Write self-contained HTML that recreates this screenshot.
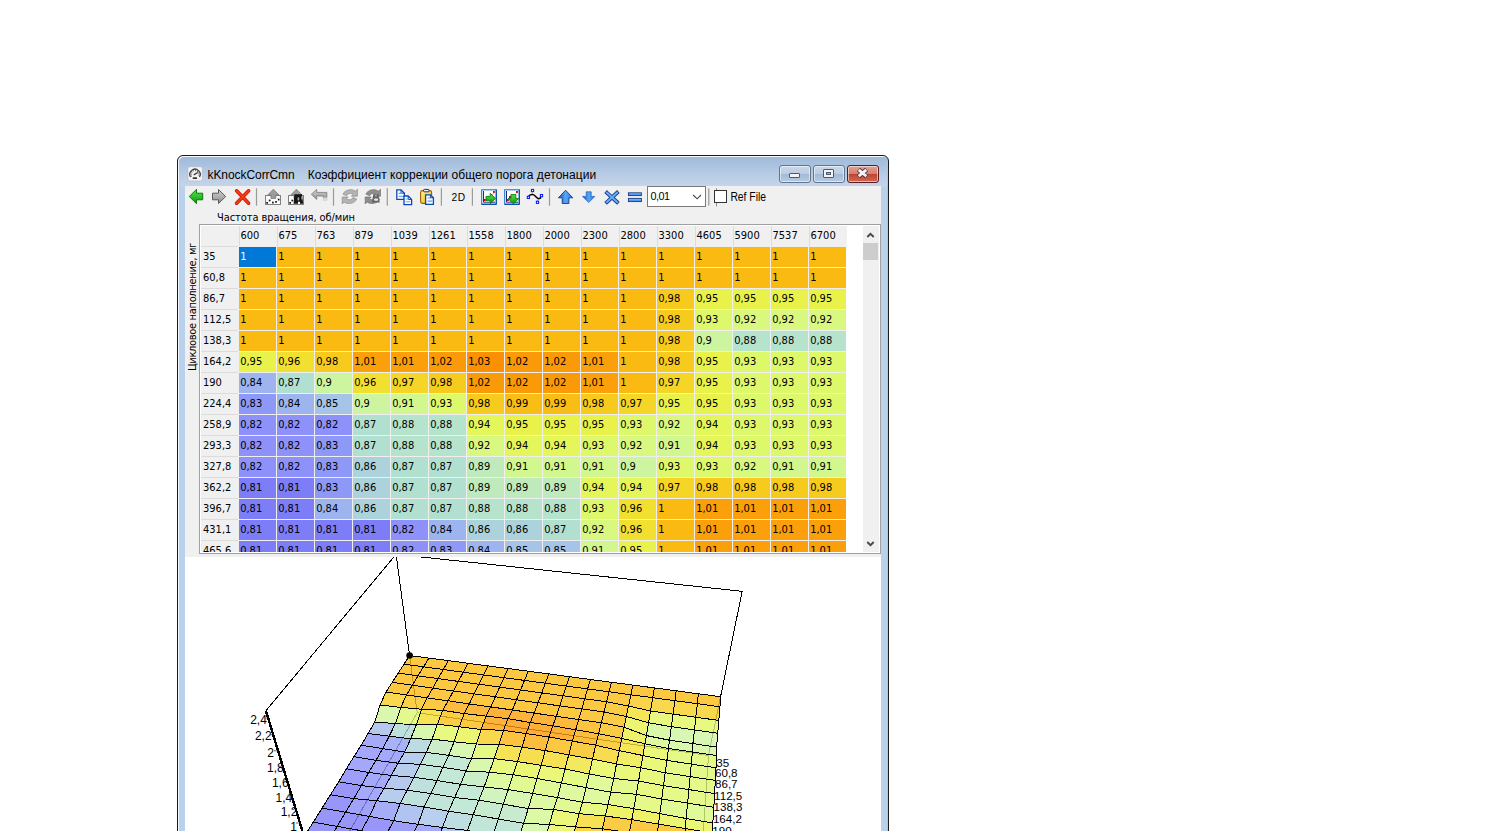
<!DOCTYPE html>
<html lang="ru"><head><meta charset="utf-8"><title>kKnockCorrCmn</title>
<style>
*{box-sizing:border-box;margin:0;padding:0}
html,body{width:1496px;height:831px;overflow:hidden;background:#fff}
body{position:relative;font-family:"DejaVu Sans Condensed","Liberation Sans",sans-serif;font-size:11px;color:#000}
#win{position:absolute;left:177px;top:155px;width:712px;height:700px}
#frame{position:absolute;left:0;top:0;width:712px;height:700px;border:1px solid #1b1b1b;border-radius:6px 6px 0 0;
 background:linear-gradient(180deg,#9db9d9 0px,#a9c1de 8px,#bccfe6 22px,#c4d5ea 30px,#b9d1ea 31px,#b9d1ea 100%);
 box-shadow:inset 1px 1px 0 #f6fafd, inset -1px 0 0 #7fd8f5}
#title{position:absolute;left:9px;top:11px;height:18px;white-space:nowrap}
.ticon{position:absolute;left:1px;top:0px;width:16px;height:16px}
.ttext{position:absolute;left:21.5px;top:2px;font-family:"Liberation Sans",sans-serif;font-size:12px;line-height:15px;color:#000;letter-spacing:-0.07px}
.ttext .gap{display:inline-block;width:13px}
.ttext .cy{letter-spacing:0.045px}
#btns{position:absolute;left:602px;top:10px;height:18px}
.wb{position:absolute;top:0;height:18px;border:1px solid #5f7590;border-radius:3px;box-shadow:inset 0 0 0 1px rgba(255,255,255,.55)}
.wb.min{left:0;width:32px;background:linear-gradient(180deg,#c9d8ea 0,#bccde3 48%,#a3bad6 52%,#b6cbe2 100%)}
.wb.max{left:34px;width:32px;background:linear-gradient(180deg,#c9d8ea 0,#bccde3 48%,#a3bad6 52%,#b6cbe2 100%)}
.wb.cls{left:68px;width:32px;border-color:#5a1d1d;background:linear-gradient(180deg,#e2a398 0,#d37f72 48%,#c1452e 52%,#cf6a55 100%)}
.wb.min i{position:absolute;left:9px;top:7px;width:11px;height:5px;background:#f4f4f4;border:1px solid #4d5a6b;border-radius:1px}
.wb.max i{position:absolute;left:9px;top:3px;width:11px;height:9px;background:#f4f4f4;border:1px solid #4d5a6b;border-radius:1px}
.wb.max i:after{content:"";box-sizing:border-box;position:absolute;left:2px;top:2px;width:5px;height:3px;background:#9fb4cf;border:1px solid #4d5a6b}
.wb.cls svg{position:absolute;left:7.7px;top:0.9px}
#client{position:absolute;left:8px;top:31px;width:696px;height:669px;background:#f0f0f0;overflow:hidden}
#toolbar{position:absolute;left:0;top:0;width:696px;height:24px}
#toolbar svg{position:absolute}
.sep{position:absolute;top:3px;width:1px;height:17px;background:#a0a0a0}
#xlabel{position:absolute;left:32px;top:25px;letter-spacing:-0.07px;font-size:11px;line-height:13px;white-space:nowrap}
#ylabel{position:absolute;left:0px;top:52px;width:14px;height:136px}
#ylabel span{position:absolute;left:0;top:0;transform-origin:0 0;transform:translate(1px,133px) rotate(-90deg);white-space:nowrap;font-size:11px;line-height:13px;letter-spacing:-0.33px}
#grid{position:absolute;left:14px;top:38px;width:682px;height:330px;border:1px solid #a0a0a0;background:#fff;overflow:hidden}
#gridin{position:absolute;left:0;top:0;width:647px;height:328px;overflow:hidden;background:#fff}
#gridin:before{content:"";position:absolute;left:0;top:1px;width:647px;height:20px;background:#f0f0f0}
#gridin:after{content:"";position:absolute;left:0;top:1px;width:38px;height:327px;background:#f0f0f0}
.hc{position:absolute;top:1px;width:38px;height:20px;line-height:19px;padding-left:0.5px;border-left:1px solid #dcdcdc;z-index:2;white-space:nowrap}
.rh{position:absolute;left:0;width:38px;height:21px;line-height:19px;padding-left:3px;border-top:1px solid #dcdcdc;z-index:2;white-space:nowrap}
.c{position:absolute;width:37px;height:20px;line-height:19px;padding-left:1.2px;z-index:1;white-space:nowrap;margin-top:1px}
.c.sel{background:#0078d7;color:#fff}
#vscroll{position:absolute;left:663px;top:0;width:17px;height:328px;background:#f0f0f0}
#vscroll .thumb{position:absolute;left:0px;top:18px;width:15px;height:17px;background:#cdcdcd}
#vscroll .sa{position:absolute;left:0;width:17px;height:17px}
#vscroll .sa.up{top:0}
#vscroll .sa.dn{top:311px}
#vscroll svg{position:absolute;left:3px;top:7px}
#chart{position:absolute;left:0;top:371px;width:696px;height:274px;background:#fff;overflow:hidden}
#chart svg{position:absolute;left:0;top:0}
#grid:after{content:"";position:absolute;left:0;top:0;width:680px;height:328px;border:1px solid #fff;box-sizing:border-box;z-index:9;pointer-events:none}
#vscroll .sa.dn svg{top:5px}
#cellbg{position:absolute;left:38px;top:21px;width:608px;height:307px;background:#efefef}

</style></head>
<body>
<div id="win">
 <div id="frame"></div>
 <div id="title"><span class="ticon"><svg width="16" height="16" viewBox="0 0 16 16"><rect x="0.9" y="0.7" width="14.5" height="14.2" rx="2" fill="#f3f3f3" stroke="#a9b6c6" stroke-width="0.6"/><path d="M3.5 11 A5.2 5.2 0 1 1 12.5 11" fill="none" stroke="#3c3c3c" stroke-width="1.3"/><path d="M4.6 10.4 A3.9 3.9 0 1 1 11.4 10.4" fill="none" stroke="#3c3c3c" stroke-width="1.2" stroke-dasharray="0.7 1.35"/><path d="M7.2 8.6 L10.4 6.8" stroke="#333" stroke-width="1.3" stroke-linecap="round"/><rect x="5.7" y="11.2" width="4.4" height="1.8" rx="0.6" fill="#333"/></svg></span><span class="ttext">kKnockCorrCmn<span class="gap"></span><span class="cy">Коэффициент коррекции общего порога детонации</span></span></div>
 <div id="btns"><div class="wb min"><i></i></div><div class="wb max"><i></i></div><div class="wb cls"><svg width="13" height="12" viewBox="0 0 13 12"><path d="M2.4 2.6 L10.6 9.4 M10.6 2.6 L2.4 9.4" stroke="#53303a" stroke-width="4.6" stroke-linecap="butt"/><path d="M2.7 2.85 L10.3 9.15 M10.3 2.85 L2.7 9.15" stroke="#f4f4f6" stroke-width="2.8"/></svg></div></div>
 <div id="client">
  <div id="toolbar"><svg width="696" height="24" viewBox="0 0 696 24" style="left:0;top:0"><defs>
<linearGradient id="gG" x1="0" y1="0" x2="0" y2="1"><stop offset="0" stop-color="#55dd44"/><stop offset="0.5" stop-color="#2fc22a"/><stop offset="1" stop-color="#0d8a10"/></linearGradient>
<linearGradient id="gGr" x1="0" y1="0" x2="0" y2="1"><stop offset="0" stop-color="#d0d0d0"/><stop offset="0.5" stop-color="#b0b0b0"/><stop offset="1" stop-color="#8c8c8c"/></linearGradient>
<linearGradient id="gB" x1="0" y1="0" x2="1" y2="0"><stop offset="0" stop-color="#1c50b0"/><stop offset="0.5" stop-color="#55a8f5"/><stop offset="1" stop-color="#2a6fd0"/></linearGradient>
<linearGradient id="gBv" x1="0" y1="0" x2="0" y2="1"><stop offset="0" stop-color="#8cc8ff"/><stop offset="1" stop-color="#2f7fe0"/></linearGradient>
<linearGradient id="gY" x1="0" y1="0" x2="1" y2="1"><stop offset="0" stop-color="#fff09a"/><stop offset="0.6" stop-color="#f6cf3a"/><stop offset="1" stop-color="#e0a010"/></linearGradient>
</defs><polygon points="4.3,10.5 11.5,3.3 11.5,7.2 17.7,7.2 17.7,13.8 11.5,13.8 11.5,17.7" fill="url(#gG)" stroke="#0b7d0e" stroke-width="1" stroke-linejoin="round"/><polygon points="40.7,10.5 33.5,3.5 33.5,7.2 27.5,7.2 27.5,13.8 33.5,13.8 33.5,17.5" fill="url(#gGr)" stroke="#5a5a5a" stroke-width="1" stroke-linejoin="round"/><path d="M51.6 4.8 L63.6 17.2 M63.6 4.8 L51.6 17.2" stroke="#c81208" stroke-width="3.6" stroke-linecap="round"/><path d="M51.6 4.8 L63.6 17.2 M63.6 4.8 L51.6 17.2" stroke="#f23c0c" stroke-width="2.2" stroke-linecap="round"/><rect x="70.9" y="2.3" width="1.2" height="17.4" fill="#9a9a9a"/><rect x="80.5" y="9.5" width="15" height="9" fill="#fafafa" stroke="#808080" stroke-width="1"/><polygon points="88.4,3.2 94.0,9.0 90.8,9.0 90.8,12.4 86.0,12.4 86.0,9.0 82.8,9.0" fill="#9c9c9c" stroke="#777" stroke-width="0.8"/><rect x="83.8" y="13.6" width="1.7" height="1.7" fill="#111"/><rect x="81.3" y="16.0" width="1.7" height="1.7" fill="#111"/><rect x="87.0" y="15.7" width="1.7" height="1.7" fill="#111"/><rect x="90.2" y="15.0" width="1.7" height="1.7" fill="#111"/><rect x="92.8" y="12.7" width="1.7" height="1.7" fill="#111"/><rect x="103.5" y="9.5" width="15" height="9" fill="#fafafa" stroke="#808080" stroke-width="1"/><polygon points="111.4,3.2 117.0,9.0 113.8,9.0 113.8,12.4 109.0,12.4 109.0,9.0 105.8,9.0" fill="#9c9c9c" stroke="#777" stroke-width="0.8"/><rect x="104.3" y="16.0" width="1.7" height="1.7" fill="#111"/><rect x="106.5" y="13.7" width="1.7" height="1.7" fill="#111"/><path d="M109.4 8.2 h7.6 l1.2 9.6 h-3.2 v-2 h-2 v2 h-4.4 z" fill="#151515"/><rect x="112.6" y="11.4" width="1.6" height="3" fill="#aaa"/><rect x="116.4" y="10.4" width="1" height="3" fill="#bbb"/><path d="M126.3 8.3 L131.7 3.4 L131.7 6.4 L141.8 6.4 L141.8 14.4 L138.4 14.4 L138.4 10 L131.7 10 L131.7 13.4 Z" fill="url(#gGr)" stroke="#7a7a7a" stroke-width="0.8" stroke-linejoin="round"/><rect x="137.8" y="11.6" width="5" height="3.6" fill="#f0f0f0" opacity="0.75"/><rect x="147.9" y="2.3" width="1.2" height="17.4" fill="#9a9a9a"/><g transform="translate(157.0,3.2)" fill="#b4b4b4" stroke="#8a8a8a" stroke-width="0.7" stroke-linejoin="round"><path d="M0.9 4.9 C2.8 0.6 9.5 -1 13.6 2.1 L15.4 0 L15.4 7 L9.5 7 L11.1 5.2 C9 3.6 5.8 3.9 4.7 6.5 Z"/><path d="M0.9 4.9 C2.8 0.6 9.5 -1 13.6 2.1 L15.4 0 L15.4 7 L9.5 7 L11.1 5.2 C9 3.6 5.8 3.9 4.7 6.5 Z" transform="rotate(180 7.8 7.4)"/></g><g transform="translate(180.0,3.2)" fill="#8e8e8e" stroke="#6e6e6e" stroke-width="0.7" stroke-linejoin="round"><path d="M0.9 4.9 C2.8 0.6 9.5 -1 13.6 2.1 L15.4 0 L15.4 7 L9.5 7 L11.1 5.2 C9 3.6 5.8 3.9 4.7 6.5 Z"/><path d="M0.9 4.9 C2.8 0.6 9.5 -1 13.6 2.1 L15.4 0 L15.4 7 L9.5 7 L11.1 5.2 C9 3.6 5.8 3.9 4.7 6.5 Z" transform="rotate(180 7.8 7.4)"/></g><path d="M188.4 8 h5 l1.4 8.6 h-8 z" fill="#666"/><rect x="189" y="12.6" width="4.2" height="2.2" rx="1" fill="#e8e8e8"/><rect x="190" y="8.6" width="1.8" height="1.8" fill="#aaa"/><rect x="201.7" y="2.3" width="1.2" height="17.4" fill="#9a9a9a"/><path d="M211.8 3.8 h4.2 l3.4 3.4 v6.2 h-7.6 z" fill="#fdfefe" stroke="#0c45b4" stroke-width="1.3" stroke-linejoin="miter"/><path d="M216.0 3.8 v3.4 h3.4" fill="none" stroke="#0c45b4" stroke-width="1"/><path d="M213.6 7.4 h3.6 M213.6 10.4 h5" stroke="#6aa8ee" stroke-width="1.1"/><path d="M219.0 10.0 h4.2 l3.4 3.4 v5.2 h-7.6 z" fill="#fdfefe" stroke="#0c45b4" stroke-width="1.3" stroke-linejoin="miter"/><path d="M223.2 10.0 v3.4 h3.4" fill="none" stroke="#0c45b4" stroke-width="1"/><path d="M220.6 13 h3 M220.6 15.8 h4.6" stroke="#6aa8ee" stroke-width="1.1"/><rect x="235.6" y="4.6" width="11" height="12.8" rx="1.8" fill="url(#gY)" stroke="#9a5e08" stroke-width="1.1"/><rect x="238.6" y="3.4" width="5.4" height="2.4" rx="0.8" fill="#f4f4fa" stroke="#1a2a80" stroke-width="1"/><path d="M240.6 8.8 h4.8 l3.0 3.0 v6.6 h-7.8 z" fill="#fdfefe" stroke="#0c45b4" stroke-width="1.3" stroke-linejoin="miter"/><path d="M245.4 8.8 v3.0 h3.0" fill="none" stroke="#0c45b4" stroke-width="1"/><path d="M242.6 12 h2.6 M242.6 15.2 h4.6" stroke="#5a9ae8" stroke-width="1.2"/><rect x="255.8" y="2.3" width="1.2" height="17.4" fill="#9a9a9a"/><text x="266.4" y="14.8" font-family="Liberation Sans, sans-serif" font-size="10.2" letter-spacing="0.7" fill="#000">2D</text><rect x="286.8" y="2.3" width="1.2" height="17.4" fill="#9a9a9a"/><rect x="296.7" y="3.8" width="14.6" height="14.4" fill="#fff" stroke="#1a74d0" stroke-width="1.1"/><path d="M296.7 18.3 h14.6 M311.3 3.8 v14.4" stroke="#0d4fa6" stroke-width="1.2" fill="none"/><path d="M298.5 5 v11.2 h11.6" stroke="#26267a" stroke-width="1" fill="none"/><path d="M308.9 5.9 l-1.8 4" stroke="#e88" stroke-width="0.8"/><rect x="308.0" y="5" width="1.9" height="1.9" fill="#c40818"/><rect x="298.8" y="13" width="2" height="2" fill="#c40818"/><polygon points="301.0,10.4 305.2,10.4 305.2,7.3 310.6,12.4 305.2,17.5 305.2,14.4 301.0,14.4" fill="url(#gG)" stroke="#0b7d0e" stroke-width="0.9" stroke-linejoin="round"/><rect x="319.7" y="3.8" width="14.6" height="14.4" fill="#fff" stroke="#1a74d0" stroke-width="1.1"/><path d="M319.7 18.3 h14.6 M334.3 3.8 v14.4" stroke="#0d4fa6" stroke-width="1.2" fill="none"/><path d="M321.5 5 v11.2 h11.6" stroke="#26267a" stroke-width="1" fill="none"/><path d="M331.9 5.9 l-1.8 4" stroke="#e88" stroke-width="0.8"/><rect x="331.0" y="5" width="1.9" height="1.9" fill="#c40818"/><rect x="324.0" y="10" width="2" height="2" fill="#c40818"/><rect x="321.8" y="13" width="2" height="2" fill="#c40818"/><polygon points="325.9,8.6 330.8,8.6 330.8,12.6 333.7,12.6 328.4,17.8 323.1,12.6 325.9,12.6" fill="url(#gG)" stroke="#0b7d0e" stroke-width="0.9" stroke-linejoin="round"/><path d="M347.5 4.5 L347.1 8.6 M352.5 16.3 L353 12.4" stroke="#a0a0a0" stroke-width="0.8"/><path d="M343.7 9.9 C345.5 8.4 347.2 7.8 349 9 C351 10.4 352 12.4 353.4 12.6 C354.6 12.8 355.4 12.2 356.2 11.4" fill="none" stroke="#000" stroke-width="1.5"/><rect x="346.4" y="3.4" width="2.2" height="2.2" fill="#fff" stroke="#0a18ff" stroke-width="1.05"/><rect x="342.3" y="10.3" width="2.2" height="2.2" fill="#fff" stroke="#0a18ff" stroke-width="1.05"/><rect x="355.4" y="8.5" width="2.2" height="2.2" fill="#fff" stroke="#0a18ff" stroke-width="1.05"/><rect x="351.4" y="15.2" width="2.2" height="2.2" fill="#fff" stroke="#0a18ff" stroke-width="1.05"/><rect x="363.9" y="2.3" width="1.2" height="17.4" fill="#9a9a9a"/><polygon points="380.6,4.2 387.8,11.8 383.9,11.8 383.9,17.5 377.2,17.5 377.2,11.8 373.4,11.8" fill="url(#gB)" stroke="#1a3a8c" stroke-width="0.9" stroke-linejoin="round"/><polygon points="401.2,5.8 406.2,5.8 406.2,10.4 409.8,10.4 403.7,16.5 397.5,10.4 401.2,10.4" fill="url(#gB)" stroke="#2a5cc0" stroke-width="0.7" stroke-linejoin="round"/><path d="M422.0 6.8 L432.0 16.0 M432.0 6.8 L422.0 16.0" stroke="#1e3a86" stroke-width="3.8" stroke-linecap="square"/><path d="M422.0 6.8 L432.0 16.0 M432.0 6.8 L422.0 16.0" stroke="#62aaf2" stroke-width="2.2" stroke-linecap="square"/><rect x="443.4" y="6.8" width="13" height="2.8" fill="url(#gBv)" stroke="#1e3a86" stroke-width="0.9"/><rect x="443.4" y="12.4" width="13" height="3.2" fill="url(#gBv)" stroke="#1e3a86" stroke-width="0.9"/><rect x="462.5" y="0.5" width="58" height="20" fill="#fff" stroke="#7a7a7a" stroke-width="1"/><text x="465.6" y="13.5" font-family="Liberation Sans, sans-serif" font-size="10.8" letter-spacing="-0.5" fill="#000">0,01</text><path d="M508.2 9 L512.1 12.8 L516 9" fill="none" stroke="#444" stroke-width="1.1"/><rect x="523.2" y="2.3" width="1.2" height="17.4" fill="#9a9a9a"/><rect x="531" y="2.3" width="1" height="18" fill="#8a8a8a"/><rect x="529.5" y="4.5" width="12" height="12" fill="#fff" stroke="#333" stroke-width="1"/><text x="545.4" y="14.8" font-family="Liberation Sans, sans-serif" font-size="12" textLength="35.6" lengthAdjust="spacingAndGlyphs" fill="#000">Ref File</text></svg></div>
  <div id="xlabel">Частота вращения, об/мин</div>
  <div id="ylabel"><span>Цикловое наполнение, мг</span></div>
  <div id="grid">
   <div id="gridin">
<div id="cellbg"></div>
<div class="hc" style="left:39px">600</div>
<div class="hc" style="left:77px">675</div>
<div class="hc" style="left:115px">763</div>
<div class="hc" style="left:153px">879</div>
<div class="hc" style="left:191px">1039</div>
<div class="hc" style="left:229px">1261</div>
<div class="hc" style="left:267px">1558</div>
<div class="hc" style="left:305px">1800</div>
<div class="hc" style="left:343px">2000</div>
<div class="hc" style="left:381px">2300</div>
<div class="hc" style="left:419px">2800</div>
<div class="hc" style="left:457px">3300</div>
<div class="hc" style="left:495px">4605</div>
<div class="hc" style="left:533px">5900</div>
<div class="hc" style="left:571px">7537</div>
<div class="hc" style="left:609px">6700</div>
<div class="rh" style="top:21px">35</div>
<div class="rh" style="top:42px">60,8</div>
<div class="rh" style="top:63px">86,7</div>
<div class="rh" style="top:84px">112,5</div>
<div class="rh" style="top:105px">138,3</div>
<div class="rh" style="top:126px">164,2</div>
<div class="rh" style="top:147px">190</div>
<div class="rh" style="top:168px">224,4</div>
<div class="rh" style="top:189px">258,9</div>
<div class="rh" style="top:210px">293,3</div>
<div class="rh" style="top:231px">327,8</div>
<div class="rh" style="top:252px">362,2</div>
<div class="rh" style="top:273px">396,7</div>
<div class="rh" style="top:294px">431,1</div>
<div class="rh" style="top:315px">465,6</div>
<div class="c sel" style="left:39px;top:21px">1</div>
<div class="c" style="left:77px;top:21px;background:#fbba12">1</div>
<div class="c" style="left:115px;top:21px;background:#fbba12">1</div>
<div class="c" style="left:153px;top:21px;background:#fbba12">1</div>
<div class="c" style="left:191px;top:21px;background:#fbba12">1</div>
<div class="c" style="left:229px;top:21px;background:#fbba12">1</div>
<div class="c" style="left:267px;top:21px;background:#fbba12">1</div>
<div class="c" style="left:305px;top:21px;background:#fbba12">1</div>
<div class="c" style="left:343px;top:21px;background:#fbba12">1</div>
<div class="c" style="left:381px;top:21px;background:#fbba12">1</div>
<div class="c" style="left:419px;top:21px;background:#fbba12">1</div>
<div class="c" style="left:457px;top:21px;background:#fbba12">1</div>
<div class="c" style="left:495px;top:21px;background:#fbba12">1</div>
<div class="c" style="left:533px;top:21px;background:#fbba12">1</div>
<div class="c" style="left:571px;top:21px;background:#fbba12">1</div>
<div class="c" style="left:609px;top:21px;background:#fbba12">1</div>
<div class="c" style="left:39px;top:42px;background:#fbba12">1</div>
<div class="c" style="left:77px;top:42px;background:#fbba12">1</div>
<div class="c" style="left:115px;top:42px;background:#fbba12">1</div>
<div class="c" style="left:153px;top:42px;background:#fbba12">1</div>
<div class="c" style="left:191px;top:42px;background:#fbba12">1</div>
<div class="c" style="left:229px;top:42px;background:#fbba12">1</div>
<div class="c" style="left:267px;top:42px;background:#fbba12">1</div>
<div class="c" style="left:305px;top:42px;background:#fbba12">1</div>
<div class="c" style="left:343px;top:42px;background:#fbba12">1</div>
<div class="c" style="left:381px;top:42px;background:#fbba12">1</div>
<div class="c" style="left:419px;top:42px;background:#fbba12">1</div>
<div class="c" style="left:457px;top:42px;background:#fbba12">1</div>
<div class="c" style="left:495px;top:42px;background:#fbba12">1</div>
<div class="c" style="left:533px;top:42px;background:#fbba12">1</div>
<div class="c" style="left:571px;top:42px;background:#fbba12">1</div>
<div class="c" style="left:609px;top:42px;background:#fbba12">1</div>
<div class="c" style="left:39px;top:63px;background:#fbba12">1</div>
<div class="c" style="left:77px;top:63px;background:#fbba12">1</div>
<div class="c" style="left:115px;top:63px;background:#fbba12">1</div>
<div class="c" style="left:153px;top:63px;background:#fbba12">1</div>
<div class="c" style="left:191px;top:63px;background:#fbba12">1</div>
<div class="c" style="left:229px;top:63px;background:#fbba12">1</div>
<div class="c" style="left:267px;top:63px;background:#fbba12">1</div>
<div class="c" style="left:305px;top:63px;background:#fbba12">1</div>
<div class="c" style="left:343px;top:63px;background:#fbba12">1</div>
<div class="c" style="left:381px;top:63px;background:#fbba12">1</div>
<div class="c" style="left:419px;top:63px;background:#fbba12">1</div>
<div class="c" style="left:457px;top:63px;background:#f7cb1e">0,98</div>
<div class="c" style="left:495px;top:63px;background:#e8f24a">0,95</div>
<div class="c" style="left:533px;top:63px;background:#e8f24a">0,95</div>
<div class="c" style="left:571px;top:63px;background:#e8f24a">0,95</div>
<div class="c" style="left:609px;top:63px;background:#e8f24a">0,95</div>
<div class="c" style="left:39px;top:84px;background:#fbba12">1</div>
<div class="c" style="left:77px;top:84px;background:#fbba12">1</div>
<div class="c" style="left:115px;top:84px;background:#fbba12">1</div>
<div class="c" style="left:153px;top:84px;background:#fbba12">1</div>
<div class="c" style="left:191px;top:84px;background:#fbba12">1</div>
<div class="c" style="left:229px;top:84px;background:#fbba12">1</div>
<div class="c" style="left:267px;top:84px;background:#fbba12">1</div>
<div class="c" style="left:305px;top:84px;background:#fbba12">1</div>
<div class="c" style="left:343px;top:84px;background:#fbba12">1</div>
<div class="c" style="left:381px;top:84px;background:#fbba12">1</div>
<div class="c" style="left:419px;top:84px;background:#fbba12">1</div>
<div class="c" style="left:457px;top:84px;background:#f7cb1e">0,98</div>
<div class="c" style="left:495px;top:84px;background:#ddf86b">0,93</div>
<div class="c" style="left:533px;top:84px;background:#d8f880">0,92</div>
<div class="c" style="left:571px;top:84px;background:#d8f880">0,92</div>
<div class="c" style="left:609px;top:84px;background:#d8f880">0,92</div>
<div class="c" style="left:39px;top:105px;background:#fbba12">1</div>
<div class="c" style="left:77px;top:105px;background:#fbba12">1</div>
<div class="c" style="left:115px;top:105px;background:#fbba12">1</div>
<div class="c" style="left:153px;top:105px;background:#fbba12">1</div>
<div class="c" style="left:191px;top:105px;background:#fbba12">1</div>
<div class="c" style="left:229px;top:105px;background:#fbba12">1</div>
<div class="c" style="left:267px;top:105px;background:#fbba12">1</div>
<div class="c" style="left:305px;top:105px;background:#fbba12">1</div>
<div class="c" style="left:343px;top:105px;background:#fbba12">1</div>
<div class="c" style="left:381px;top:105px;background:#fbba12">1</div>
<div class="c" style="left:419px;top:105px;background:#fbba12">1</div>
<div class="c" style="left:457px;top:105px;background:#f7cb1e">0,98</div>
<div class="c" style="left:495px;top:105px;background:#cdf5a0">0,9</div>
<div class="c" style="left:533px;top:105px;background:#b5e3cc">0,88</div>
<div class="c" style="left:571px;top:105px;background:#b5e3cc">0,88</div>
<div class="c" style="left:609px;top:105px;background:#b5e3cc">0,88</div>
<div class="c" style="left:39px;top:126px;background:#e8f24a">0,95</div>
<div class="c" style="left:77px;top:126px;background:#f2e030">0,96</div>
<div class="c" style="left:115px;top:126px;background:#f7cb1e">0,98</div>
<div class="c" style="left:153px;top:126px;background:#fba00a">1,01</div>
<div class="c" style="left:191px;top:126px;background:#fba00a">1,01</div>
<div class="c" style="left:229px;top:126px;background:#fb9a08">1,02</div>
<div class="c" style="left:267px;top:126px;background:#fb9005">1,03</div>
<div class="c" style="left:305px;top:126px;background:#fb9a08">1,02</div>
<div class="c" style="left:343px;top:126px;background:#fb9a08">1,02</div>
<div class="c" style="left:381px;top:126px;background:#fba00a">1,01</div>
<div class="c" style="left:419px;top:126px;background:#fbba12">1</div>
<div class="c" style="left:457px;top:126px;background:#f7cb1e">0,98</div>
<div class="c" style="left:495px;top:126px;background:#e8f24a">0,95</div>
<div class="c" style="left:533px;top:126px;background:#ddf86b">0,93</div>
<div class="c" style="left:571px;top:126px;background:#ddf86b">0,93</div>
<div class="c" style="left:609px;top:126px;background:#ddf86b">0,93</div>
<div class="c" style="left:39px;top:147px;background:#9db4ee">0,84</div>
<div class="c" style="left:77px;top:147px;background:#b2e0d0">0,87</div>
<div class="c" style="left:115px;top:147px;background:#cdf5a0">0,9</div>
<div class="c" style="left:153px;top:147px;background:#f2e030">0,96</div>
<div class="c" style="left:191px;top:147px;background:#f5d626">0,97</div>
<div class="c" style="left:229px;top:147px;background:#f7cb1e">0,98</div>
<div class="c" style="left:267px;top:147px;background:#fb9a08">1,02</div>
<div class="c" style="left:305px;top:147px;background:#fb9a08">1,02</div>
<div class="c" style="left:343px;top:147px;background:#fb9a08">1,02</div>
<div class="c" style="left:381px;top:147px;background:#fba00a">1,01</div>
<div class="c" style="left:419px;top:147px;background:#fbba12">1</div>
<div class="c" style="left:457px;top:147px;background:#f5d626">0,97</div>
<div class="c" style="left:495px;top:147px;background:#e8f24a">0,95</div>
<div class="c" style="left:533px;top:147px;background:#ddf86b">0,93</div>
<div class="c" style="left:571px;top:147px;background:#ddf86b">0,93</div>
<div class="c" style="left:609px;top:147px;background:#ddf86b">0,93</div>
<div class="c" style="left:39px;top:168px;background:#8e98f6">0,83</div>
<div class="c" style="left:77px;top:168px;background:#9db4ee">0,84</div>
<div class="c" style="left:115px;top:168px;background:#a6c4e8">0,85</div>
<div class="c" style="left:153px;top:168px;background:#cdf5a0">0,9</div>
<div class="c" style="left:191px;top:168px;background:#d3f78f">0,91</div>
<div class="c" style="left:229px;top:168px;background:#ddf86b">0,93</div>
<div class="c" style="left:267px;top:168px;background:#f7cb1e">0,98</div>
<div class="c" style="left:305px;top:168px;background:#f9be16">0,99</div>
<div class="c" style="left:343px;top:168px;background:#f9be16">0,99</div>
<div class="c" style="left:381px;top:168px;background:#f7cb1e">0,98</div>
<div class="c" style="left:419px;top:168px;background:#f5d626">0,97</div>
<div class="c" style="left:457px;top:168px;background:#e8f24a">0,95</div>
<div class="c" style="left:495px;top:168px;background:#e8f24a">0,95</div>
<div class="c" style="left:533px;top:168px;background:#ddf86b">0,93</div>
<div class="c" style="left:571px;top:168px;background:#ddf86b">0,93</div>
<div class="c" style="left:609px;top:168px;background:#ddf86b">0,93</div>
<div class="c" style="left:39px;top:189px;background:#8d91f9">0,82</div>
<div class="c" style="left:77px;top:189px;background:#8d91f9">0,82</div>
<div class="c" style="left:115px;top:189px;background:#8d91f9">0,82</div>
<div class="c" style="left:153px;top:189px;background:#b2e0d0">0,87</div>
<div class="c" style="left:191px;top:189px;background:#b5e3cc">0,88</div>
<div class="c" style="left:229px;top:189px;background:#b5e3cc">0,88</div>
<div class="c" style="left:267px;top:189px;background:#e4f65a">0,94</div>
<div class="c" style="left:305px;top:189px;background:#e8f24a">0,95</div>
<div class="c" style="left:343px;top:189px;background:#e8f24a">0,95</div>
<div class="c" style="left:381px;top:189px;background:#e8f24a">0,95</div>
<div class="c" style="left:419px;top:189px;background:#ddf86b">0,93</div>
<div class="c" style="left:457px;top:189px;background:#d8f880">0,92</div>
<div class="c" style="left:495px;top:189px;background:#e4f65a">0,94</div>
<div class="c" style="left:533px;top:189px;background:#ddf86b">0,93</div>
<div class="c" style="left:571px;top:189px;background:#ddf86b">0,93</div>
<div class="c" style="left:609px;top:189px;background:#ddf86b">0,93</div>
<div class="c" style="left:39px;top:210px;background:#8d91f9">0,82</div>
<div class="c" style="left:77px;top:210px;background:#8d91f9">0,82</div>
<div class="c" style="left:115px;top:210px;background:#8e98f6">0,83</div>
<div class="c" style="left:153px;top:210px;background:#b2e0d0">0,87</div>
<div class="c" style="left:191px;top:210px;background:#b5e3cc">0,88</div>
<div class="c" style="left:229px;top:210px;background:#b5e3cc">0,88</div>
<div class="c" style="left:267px;top:210px;background:#d8f880">0,92</div>
<div class="c" style="left:305px;top:210px;background:#e4f65a">0,94</div>
<div class="c" style="left:343px;top:210px;background:#e4f65a">0,94</div>
<div class="c" style="left:381px;top:210px;background:#ddf86b">0,93</div>
<div class="c" style="left:419px;top:210px;background:#d8f880">0,92</div>
<div class="c" style="left:457px;top:210px;background:#d3f78f">0,91</div>
<div class="c" style="left:495px;top:210px;background:#e4f65a">0,94</div>
<div class="c" style="left:533px;top:210px;background:#ddf86b">0,93</div>
<div class="c" style="left:571px;top:210px;background:#ddf86b">0,93</div>
<div class="c" style="left:609px;top:210px;background:#ddf86b">0,93</div>
<div class="c" style="left:39px;top:231px;background:#8d91f9">0,82</div>
<div class="c" style="left:77px;top:231px;background:#8d91f9">0,82</div>
<div class="c" style="left:115px;top:231px;background:#8e98f6">0,83</div>
<div class="c" style="left:153px;top:231px;background:#acd2dc">0,86</div>
<div class="c" style="left:191px;top:231px;background:#b2e0d0">0,87</div>
<div class="c" style="left:229px;top:231px;background:#b2e0d0">0,87</div>
<div class="c" style="left:267px;top:231px;background:#beeabc">0,89</div>
<div class="c" style="left:305px;top:231px;background:#d3f78f">0,91</div>
<div class="c" style="left:343px;top:231px;background:#d3f78f">0,91</div>
<div class="c" style="left:381px;top:231px;background:#d3f78f">0,91</div>
<div class="c" style="left:419px;top:231px;background:#cdf5a0">0,9</div>
<div class="c" style="left:457px;top:231px;background:#ddf86b">0,93</div>
<div class="c" style="left:495px;top:231px;background:#ddf86b">0,93</div>
<div class="c" style="left:533px;top:231px;background:#d8f880">0,92</div>
<div class="c" style="left:571px;top:231px;background:#d3f78f">0,91</div>
<div class="c" style="left:609px;top:231px;background:#d3f78f">0,91</div>
<div class="c" style="left:39px;top:252px;background:#7e7df8">0,81</div>
<div class="c" style="left:77px;top:252px;background:#7e7df8">0,81</div>
<div class="c" style="left:115px;top:252px;background:#8e98f6">0,83</div>
<div class="c" style="left:153px;top:252px;background:#acd2dc">0,86</div>
<div class="c" style="left:191px;top:252px;background:#b2e0d0">0,87</div>
<div class="c" style="left:229px;top:252px;background:#b2e0d0">0,87</div>
<div class="c" style="left:267px;top:252px;background:#beeabc">0,89</div>
<div class="c" style="left:305px;top:252px;background:#beeabc">0,89</div>
<div class="c" style="left:343px;top:252px;background:#beeabc">0,89</div>
<div class="c" style="left:381px;top:252px;background:#e4f65a">0,94</div>
<div class="c" style="left:419px;top:252px;background:#e4f65a">0,94</div>
<div class="c" style="left:457px;top:252px;background:#f5d626">0,97</div>
<div class="c" style="left:495px;top:252px;background:#f7cb1e">0,98</div>
<div class="c" style="left:533px;top:252px;background:#f7cb1e">0,98</div>
<div class="c" style="left:571px;top:252px;background:#f7cb1e">0,98</div>
<div class="c" style="left:609px;top:252px;background:#f7cb1e">0,98</div>
<div class="c" style="left:39px;top:273px;background:#7e7df8">0,81</div>
<div class="c" style="left:77px;top:273px;background:#7e7df8">0,81</div>
<div class="c" style="left:115px;top:273px;background:#9db4ee">0,84</div>
<div class="c" style="left:153px;top:273px;background:#acd2dc">0,86</div>
<div class="c" style="left:191px;top:273px;background:#b2e0d0">0,87</div>
<div class="c" style="left:229px;top:273px;background:#b2e0d0">0,87</div>
<div class="c" style="left:267px;top:273px;background:#b5e3cc">0,88</div>
<div class="c" style="left:305px;top:273px;background:#b5e3cc">0,88</div>
<div class="c" style="left:343px;top:273px;background:#b5e3cc">0,88</div>
<div class="c" style="left:381px;top:273px;background:#ddf86b">0,93</div>
<div class="c" style="left:419px;top:273px;background:#f2e030">0,96</div>
<div class="c" style="left:457px;top:273px;background:#fbba12">1</div>
<div class="c" style="left:495px;top:273px;background:#fba00a">1,01</div>
<div class="c" style="left:533px;top:273px;background:#fba00a">1,01</div>
<div class="c" style="left:571px;top:273px;background:#fba00a">1,01</div>
<div class="c" style="left:609px;top:273px;background:#fba00a">1,01</div>
<div class="c" style="left:39px;top:294px;background:#7e7df8">0,81</div>
<div class="c" style="left:77px;top:294px;background:#7e7df8">0,81</div>
<div class="c" style="left:115px;top:294px;background:#7e7df8">0,81</div>
<div class="c" style="left:153px;top:294px;background:#7e7df8">0,81</div>
<div class="c" style="left:191px;top:294px;background:#8d91f9">0,82</div>
<div class="c" style="left:229px;top:294px;background:#9db4ee">0,84</div>
<div class="c" style="left:267px;top:294px;background:#acd2dc">0,86</div>
<div class="c" style="left:305px;top:294px;background:#acd2dc">0,86</div>
<div class="c" style="left:343px;top:294px;background:#b2e0d0">0,87</div>
<div class="c" style="left:381px;top:294px;background:#d8f880">0,92</div>
<div class="c" style="left:419px;top:294px;background:#f2e030">0,96</div>
<div class="c" style="left:457px;top:294px;background:#fbba12">1</div>
<div class="c" style="left:495px;top:294px;background:#fba00a">1,01</div>
<div class="c" style="left:533px;top:294px;background:#fba00a">1,01</div>
<div class="c" style="left:571px;top:294px;background:#fba00a">1,01</div>
<div class="c" style="left:609px;top:294px;background:#fba00a">1,01</div>
<div class="c" style="left:39px;top:315px;background:#7e7df8">0,81</div>
<div class="c" style="left:77px;top:315px;background:#7e7df8">0,81</div>
<div class="c" style="left:115px;top:315px;background:#7e7df8">0,81</div>
<div class="c" style="left:153px;top:315px;background:#7e7df8">0,81</div>
<div class="c" style="left:191px;top:315px;background:#8d91f9">0,82</div>
<div class="c" style="left:229px;top:315px;background:#8e98f6">0,83</div>
<div class="c" style="left:267px;top:315px;background:#9db4ee">0,84</div>
<div class="c" style="left:305px;top:315px;background:#a6c4e8">0,85</div>
<div class="c" style="left:343px;top:315px;background:#a6c4e8">0,85</div>
<div class="c" style="left:381px;top:315px;background:#d3f78f">0,91</div>
<div class="c" style="left:419px;top:315px;background:#e8f24a">0,95</div>
<div class="c" style="left:457px;top:315px;background:#fbba12">1</div>
<div class="c" style="left:495px;top:315px;background:#fba00a">1,01</div>
<div class="c" style="left:533px;top:315px;background:#fba00a">1,01</div>
<div class="c" style="left:571px;top:315px;background:#fba00a">1,01</div>
<div class="c" style="left:609px;top:315px;background:#fba00a">1,01</div>
   </div>
   <div id="vscroll"><div class="sa up"><svg width="9" height="6" viewBox="0 0 9 6"><path d="M1.3 5 L4.5 1.8 L7.7 5" fill="none" stroke="#484848" stroke-width="1.9"/></svg></div><div class="thumb"></div><div class="sa dn"><svg width="9" height="6" viewBox="0 0 9 6"><path d="M1.3 1 L4.5 4.2 L7.7 1" fill="none" stroke="#484848" stroke-width="1.9"/></svg></div></div>
  </div>
  <div id="chart"><svg width="696" height="274" viewBox="0 0 696 274"><line shape-rendering="crispEdges" x1="232.2" y1="155.7" x2="523.5" y2="198.5" stroke="#000" stroke-width="1"/><line shape-rendering="crispEdges" x1="232.2" y1="155.7" x2="133.8" y2="328.1" stroke="#000" stroke-width="1"/><line shape-rendering="crispEdges" x1="523.5" y1="198.5" x2="509.7" y2="401.9" stroke="#000" stroke-width="1"/><line shape-rendering="crispEdges" x1="232.2" y1="155.7" x2="211.1" y2="-2.7" stroke="#000" stroke-width="1"/><line shape-rendering="crispEdges" x1="523.5" y1="198.5" x2="557.2" y2="34.3" stroke="#000" stroke-width="1"/><line shape-rendering="crispEdges" x1="211.1" y1="-2.7" x2="557.2" y2="34.3" stroke="#000" stroke-width="1"/><line shape-rendering="crispEdges" x1="211.1" y1="-2.7" x2="80.9" y2="153.7" stroke="#000" stroke-width="1"/><g fill-opacity="0.8" stroke="#000" stroke-width="1" stroke-linejoin="round" shape-rendering="crispEdges"><polygon points="224.6,98.5 243.9,101.1 238.5,109.8 219.0,107.2" fill="#fbba12"/><polygon points="243.9,101.1 263.3,103.6 258.3,112.5 238.5,109.8" fill="#fbba12"/><polygon points="263.3,103.6 283.0,106.3 278.3,115.2 258.3,112.5" fill="#fbba12"/><polygon points="283.0,106.3 302.9,108.9 298.5,117.9 278.3,115.2" fill="#fbba12"/><polygon points="302.9,108.9 323.0,111.5 318.9,120.7 298.5,117.9" fill="#fbba12"/><polygon points="323.0,111.5 343.3,114.2 339.5,123.4 318.9,120.7" fill="#fbba12"/><polygon points="343.3,114.2 363.8,116.9 360.3,126.2 339.5,123.4" fill="#fbba12"/><polygon points="363.8,116.9 384.5,119.7 381.3,129.1 360.3,126.2" fill="#fbba12"/><polygon points="384.5,119.7 405.4,122.5 402.6,131.9 381.3,129.1" fill="#fbba12"/><polygon points="405.4,122.5 426.5,125.3 424.1,134.8 402.6,131.9" fill="#fbba12"/><polygon points="426.5,125.3 447.9,128.1 445.8,137.8 424.1,134.8" fill="#fbba12"/><polygon points="447.9,128.1 469.4,130.9 467.8,140.7 445.8,137.8" fill="#fbba12"/><polygon points="469.4,130.9 491.2,133.8 489.9,143.7 467.8,140.7" fill="#fbba12"/><polygon points="491.2,133.8 513.3,136.8 512.4,146.7 489.9,143.7" fill="#fbba12"/><polygon points="513.3,136.8 535.6,139.7 535.0,149.8 512.4,146.7" fill="#fbba12"/><polygon points="219.0,107.2 238.5,109.8 233.0,118.9 213.2,116.1" fill="#fbba12"/><polygon points="238.5,109.8 258.3,112.5 253.1,121.6 233.0,118.9" fill="#fbba12"/><polygon points="258.3,112.5 278.3,115.2 273.4,124.4 253.1,121.6" fill="#fbba12"/><polygon points="278.3,115.2 298.5,117.9 293.9,127.2 273.4,124.4" fill="#fbba12"/><polygon points="298.5,117.9 318.9,120.7 314.6,130.1 293.9,127.2" fill="#fbba12"/><polygon points="318.9,120.7 339.5,123.4 335.6,132.9 314.6,130.1" fill="#fbba12"/><polygon points="339.5,123.4 360.3,126.2 356.7,135.9 335.6,132.9" fill="#fbba12"/><polygon points="360.3,126.2 381.3,129.1 378.1,138.8 356.7,135.9" fill="#fbba12"/><polygon points="381.3,129.1 402.6,131.9 399.7,141.8 378.1,138.8" fill="#fbba12"/><polygon points="402.6,131.9 424.1,134.8 421.6,144.8 399.7,141.8" fill="#fbba12"/><polygon points="424.1,134.8 445.8,137.8 443.5,149.1 421.6,144.8" fill="#fabc14"/><polygon points="445.8,137.8 467.8,140.7 465.6,154.0 443.5,149.1" fill="#f8c81c"/><polygon points="467.8,140.7 489.9,143.7 488.1,157.1 465.6,154.0" fill="#f6d022"/><polygon points="489.9,143.7 512.4,146.7 510.8,160.3 488.1,157.1" fill="#f6d022"/><polygon points="512.4,146.7 535.0,149.8 533.8,163.4 510.8,160.3" fill="#f6d022"/><polygon points="213.2,116.1 233.0,118.9 227.4,128.2 207.2,125.4" fill="#fbba12"/><polygon points="233.0,118.9 253.1,121.6 247.8,131.1 227.4,128.2" fill="#fbba12"/><polygon points="253.1,121.6 273.4,124.4 268.4,134.0 247.8,131.1" fill="#fbba12"/><polygon points="273.4,124.4 293.9,127.2 289.2,136.9 268.4,134.0" fill="#fbba12"/><polygon points="293.9,127.2 314.6,130.1 310.3,139.8 289.2,136.9" fill="#fbba12"/><polygon points="314.6,130.1 335.6,132.9 331.5,142.8 310.3,139.8" fill="#fbba12"/><polygon points="335.6,132.9 356.7,135.9 353.1,145.8 331.5,142.8" fill="#fbba12"/><polygon points="356.7,135.9 378.1,138.8 374.8,148.9 353.1,145.8" fill="#fbba12"/><polygon points="378.1,138.8 399.7,141.8 396.8,151.9 374.8,148.9" fill="#fbba12"/><polygon points="399.7,141.8 421.6,144.8 419.0,155.0 396.8,151.9" fill="#fbba12"/><polygon points="421.6,144.8 443.5,149.1 441.3,159.5 419.0,155.0" fill="#f9be16"/><polygon points="443.5,149.1 465.6,154.0 463.6,165.8 441.3,159.5" fill="#f2e030"/><polygon points="465.6,154.0 488.1,157.1 486.4,169.7 463.6,165.8" fill="#e2f65e"/><polygon points="488.1,157.1 510.8,160.3 509.5,172.9 486.4,169.7" fill="#e1f762"/><polygon points="510.8,160.3 533.8,163.4 532.8,176.2 509.5,172.9" fill="#e1f762"/><polygon points="207.2,125.4 227.4,128.2 221.5,137.9 201.0,135.0" fill="#fbba12"/><polygon points="227.4,128.2 247.8,131.1 242.2,140.9 221.5,137.9" fill="#fbba12"/><polygon points="247.8,131.1 268.4,134.0 263.1,143.8 242.2,140.9" fill="#fbba12"/><polygon points="268.4,134.0 289.2,136.9 284.3,146.9 263.1,143.8" fill="#fbba12"/><polygon points="289.2,136.9 310.3,139.8 305.7,149.9 284.3,146.9" fill="#fbba12"/><polygon points="310.3,139.8 331.5,142.8 327.4,153.0 305.7,149.9" fill="#fbba12"/><polygon points="331.5,142.8 353.1,145.8 349.2,156.1 327.4,153.0" fill="#fbba12"/><polygon points="353.1,145.8 374.8,148.9 371.4,159.3 349.2,156.1" fill="#fbba12"/><polygon points="374.8,148.9 396.8,151.9 393.7,162.5 371.4,159.3" fill="#fbba12"/><polygon points="396.8,151.9 419.0,155.0 416.3,165.7 393.7,162.5" fill="#fbba12"/><polygon points="419.0,155.0 441.3,159.5 439.1,170.2 416.3,165.7" fill="#f9be16"/><polygon points="441.3,159.5 463.6,165.8 461.5,178.6 439.1,170.2" fill="#e7f34e"/><polygon points="463.6,165.8 486.4,169.7 484.5,183.2 461.5,178.6" fill="#d1f693"/><polygon points="486.4,169.7 509.5,172.9 507.9,186.6 484.5,183.2" fill="#cdf5a0"/><polygon points="509.5,172.9 532.8,176.2 531.6,190.1 507.9,186.6" fill="#cdf5a0"/><polygon points="201.0,135.0 221.5,137.9 215.8,150.4 195.1,148.0" fill="#f6ce20"/><polygon points="221.5,137.9 242.2,140.9 236.6,152.2 215.8,150.4" fill="#f8c41a"/><polygon points="242.2,140.9 263.1,143.8 257.7,153.4 236.6,152.2" fill="#fabb13"/><polygon points="263.1,143.8 284.3,146.9 279.2,156.6 257.7,153.4" fill="#fbad0e"/><polygon points="284.3,146.9 305.7,149.9 301.0,159.1 279.2,156.6" fill="#fba60c"/><polygon points="305.7,149.9 327.4,153.0 323.0,161.7 301.0,159.1" fill="#fb9e09"/><polygon points="327.4,153.0 349.2,156.1 345.3,165.5 323.0,161.7" fill="#fb9f0a"/><polygon points="349.2,156.1 371.4,159.3 367.8,168.8 345.3,165.5" fill="#fba00a"/><polygon points="371.4,159.3 393.7,162.5 390.6,172.8 367.8,168.8" fill="#fba70c"/><polygon points="393.7,162.5 416.3,165.7 413.5,176.7 390.6,172.8" fill="#fbb410"/><polygon points="416.3,165.7 439.1,170.2 436.7,181.4 413.5,176.7" fill="#f9be16"/><polygon points="439.1,170.2 461.5,178.6 460.0,186.8 436.7,181.4" fill="#ebed43"/><polygon points="461.5,178.6 484.5,183.2 483.5,191.5 460.0,186.8" fill="#d6f888"/><polygon points="484.5,183.2 507.9,186.6 507.4,195.0 483.5,191.5" fill="#d0f698"/><polygon points="507.9,186.6 531.6,190.1 531.7,198.6 507.4,195.0" fill="#d0f698"/><polygon points="195.1,148.0 215.8,150.4 210.4,166.5 189.7,165.2" fill="#d0f698"/><polygon points="215.8,150.4 236.6,152.2 231.3,167.8 210.4,166.5" fill="#dcf870"/><polygon points="236.6,152.2 257.7,153.4 252.4,167.2 231.3,167.8" fill="#f3dd2d"/><polygon points="257.7,153.4 279.2,156.6 274.2,169.8 252.4,167.2" fill="#f8c118"/><polygon points="279.2,156.6 301.0,159.1 296.2,172.5 274.2,169.8" fill="#fabc14"/><polygon points="301.0,159.1 323.0,161.7 318.5,173.3 296.2,172.5" fill="#fb9f0a"/><polygon points="323.0,161.7 345.3,165.5 341.2,176.6 318.5,173.3" fill="#fb9807"/><polygon points="345.3,165.5 367.8,168.8 364.1,180.0 341.2,176.6" fill="#fb9a08"/><polygon points="367.8,168.8 390.6,172.8 387.3,184.1 364.1,180.0" fill="#fb9d09"/><polygon points="390.6,172.8 413.5,176.7 410.7,188.2 387.3,184.1" fill="#fbad0e"/><polygon points="413.5,176.7 436.7,181.4 434.2,193.7 410.7,188.2" fill="#f8c118"/><polygon points="436.7,181.4 460.0,186.8 457.9,198.5 434.2,193.7" fill="#f3de2e"/><polygon points="460.0,186.8 483.5,191.5 481.9,203.4 457.9,198.5" fill="#e4f65a"/><polygon points="483.5,191.5 507.4,195.0 506.3,207.1 481.9,203.4" fill="#ddf86b"/><polygon points="507.4,195.0 531.7,198.6 531.0,210.8 506.3,207.1" fill="#ddf86b"/><polygon points="189.7,165.2 210.4,166.5 204.2,179.2 183.1,176.5" fill="#a2bceb"/><polygon points="210.4,166.5 231.3,167.8 225.7,181.9 204.2,179.2" fill="#afd9d6"/><polygon points="231.3,167.8 252.4,167.2 247.1,182.1 225.7,181.9" fill="#cef69c"/><polygon points="252.4,167.2 274.2,169.8 269.1,184.8 247.1,182.1" fill="#e1f762"/><polygon points="274.2,169.8 296.2,172.5 291.4,187.0 269.1,184.8" fill="#e7f34e"/><polygon points="296.2,172.5 318.5,173.3 313.9,187.2 291.4,187.0" fill="#f6ce20"/><polygon points="318.5,173.3 341.2,176.6 336.9,190.1 313.9,187.2" fill="#fbb410"/><polygon points="341.2,176.6 364.1,180.0 360.2,193.6 336.9,190.1" fill="#fbad0e"/><polygon points="364.1,180.0 387.3,184.1 383.7,197.8 360.2,193.6" fill="#fbba12"/><polygon points="387.3,184.1 410.7,188.2 407.5,202.1 383.7,197.8" fill="#f9be16"/><polygon points="410.7,188.2 434.2,193.7 431.5,207.0 407.5,202.1" fill="#f6d324"/><polygon points="434.2,193.7 457.9,198.5 455.8,210.7 431.5,207.0" fill="#ede93d"/><polygon points="457.9,198.5 481.9,203.4 480.2,215.8 455.8,210.7" fill="#e4f65a"/><polygon points="481.9,203.4 506.3,207.1 505.1,219.6 480.2,215.8" fill="#ddf86b"/><polygon points="506.3,207.1 531.0,210.8 530.3,223.4 505.1,219.6" fill="#ddf86b"/><polygon points="183.1,176.5 204.2,179.2 197.8,191.6 176.2,188.2" fill="#8e96f7"/><polygon points="204.2,179.2 225.7,181.9 219.7,195.1 197.8,191.6" fill="#929ff4"/><polygon points="225.7,181.9 247.1,182.1 241.3,195.4 219.7,195.1" fill="#acd2dc"/><polygon points="247.1,182.1 269.1,184.8 263.7,198.3 241.3,195.4" fill="#beeabc"/><polygon points="269.1,184.8 291.4,187.0 286.4,201.8 263.7,198.3" fill="#cdf5a0"/><polygon points="291.4,187.0 313.9,187.2 309.2,201.6 286.4,201.8" fill="#dff867"/><polygon points="313.9,187.2 336.9,190.1 332.5,204.6 309.2,201.6" fill="#f4db2b"/><polygon points="336.9,190.1 360.2,193.6 356.2,208.3 332.5,204.6" fill="#f5d626"/><polygon points="360.2,193.6 383.7,197.8 380.1,212.0 356.2,208.3" fill="#f4d828"/><polygon points="383.7,197.8 407.5,202.1 404.2,217.0 380.1,212.0" fill="#f0e436"/><polygon points="407.5,202.1 431.5,207.0 428.7,221.5 404.2,217.0" fill="#e5f556"/><polygon points="431.5,207.0 455.8,210.7 453.6,224.1 428.7,221.5" fill="#e4f65a"/><polygon points="455.8,210.7 480.2,215.8 478.5,228.6 453.6,224.1" fill="#e2f65e"/><polygon points="480.2,215.8 505.1,219.6 503.9,232.6 478.5,228.6" fill="#ddf86b"/><polygon points="505.1,219.6 530.3,223.4 529.6,236.6 503.9,232.6" fill="#ddf86b"/><polygon points="176.2,188.2 197.8,191.6 190.9,203.3 168.9,199.7" fill="#8d91f9"/><polygon points="197.8,191.6 219.7,195.1 213.0,206.2 190.9,203.3" fill="#8d93f8"/><polygon points="219.7,195.1 241.3,195.4 235.2,207.3 213.0,206.2" fill="#a4c0ea"/><polygon points="241.3,195.4 263.7,198.3 257.9,210.3 235.2,207.3" fill="#b4e2ce"/><polygon points="263.7,198.3 286.4,201.8 281.0,214.0 257.9,210.3" fill="#b5e3cc"/><polygon points="286.4,201.8 309.2,201.6 304.3,215.2 281.0,214.0" fill="#d0f698"/><polygon points="309.2,201.6 332.5,204.6 328.0,217.7 304.3,215.2" fill="#e2f65e"/><polygon points="332.5,204.6 356.2,208.3 352.0,221.5 328.0,217.7" fill="#e6f452"/><polygon points="356.2,208.3 380.1,212.0 376.4,226.0 352.0,221.5" fill="#e5f556"/><polygon points="380.1,212.0 404.2,217.0 401.0,230.6 376.4,226.0" fill="#dff867"/><polygon points="404.2,217.0 428.7,221.5 425.8,235.2 401.0,230.6" fill="#d8f880"/><polygon points="428.7,221.5 453.6,224.1 451.3,237.3 425.8,235.2" fill="#dcf870"/><polygon points="453.6,224.1 478.5,228.6 476.8,242.0 451.3,237.3" fill="#e1f762"/><polygon points="478.5,228.6 503.9,232.6 502.6,246.1 476.8,242.0" fill="#ddf86b"/><polygon points="503.9,232.6 529.6,236.6 528.8,250.3 502.6,246.1" fill="#ddf86b"/><polygon points="168.9,199.7 190.9,203.3 183.7,215.4 161.4,211.7" fill="#8d91f9"/><polygon points="190.9,203.3 213.0,206.2 206.2,218.5 183.7,215.4" fill="#8e94f8"/><polygon points="213.0,206.2 235.2,207.3 228.8,220.3 206.2,218.5" fill="#a4c0ea"/><polygon points="235.2,207.3 257.9,210.3 252.0,223.5 228.8,220.3" fill="#b2e0d0"/><polygon points="257.9,210.3 281.0,214.0 275.5,227.3 252.0,223.5" fill="#b4e2ce"/><polygon points="281.0,214.0 304.3,215.2 299.2,229.9 275.5,227.3" fill="#beeabc"/><polygon points="304.3,215.2 328.0,217.7 323.3,232.6 299.2,229.9" fill="#d6f888"/><polygon points="328.0,217.7 352.0,221.5 347.7,236.5 323.3,232.6" fill="#daf876"/><polygon points="352.0,221.5 376.4,226.0 372.5,240.6 347.7,236.5" fill="#d9f87b"/><polygon points="376.4,226.0 401.0,230.6 397.5,245.3 372.5,240.6" fill="#d6f888"/><polygon points="401.0,230.6 425.8,235.2 423.1,247.5 397.5,245.3" fill="#d6f888"/><polygon points="425.8,235.2 451.3,237.3 448.8,251.7 423.1,247.5" fill="#dcf870"/><polygon points="451.3,237.3 476.8,242.0 474.8,256.6 448.8,251.7" fill="#ddf86b"/><polygon points="476.8,242.0 502.6,246.1 501.1,261.5 474.8,256.6" fill="#d9f87b"/><polygon points="502.6,246.1 528.8,250.3 527.8,265.9 501.1,261.5" fill="#d8f880"/><polygon points="161.4,211.7 183.7,215.4 176.4,228.6 153.7,224.8" fill="#8587f8"/><polygon points="183.7,215.4 206.2,218.5 199.2,231.2 176.4,228.6" fill="#8d93f8"/><polygon points="206.2,218.5 228.8,220.3 222.2,233.2 199.2,231.2" fill="#a2bceb"/><polygon points="228.8,220.3 252.0,223.5 245.7,236.5 222.2,233.2" fill="#afd9d6"/><polygon points="252.0,223.5 275.5,227.3 269.7,240.5 245.7,236.5" fill="#b2e0d0"/><polygon points="275.5,227.3 299.2,229.9 293.8,243.2 269.7,240.5" fill="#b5e3cc"/><polygon points="299.2,229.9 323.3,232.6 318.4,247.3 293.8,243.2" fill="#c6f0ae"/><polygon points="323.3,232.6 347.7,236.5 343.3,251.5 318.4,247.3" fill="#cdf5a0"/><polygon points="347.7,236.5 372.5,240.6 368.6,252.4 343.3,251.5" fill="#d4f78b"/><polygon points="372.5,240.6 397.5,245.3 394.2,256.7 368.6,252.4" fill="#d9f87b"/><polygon points="397.5,245.3 423.1,247.5 420.3,259.0 394.2,256.7" fill="#e1f762"/><polygon points="423.1,247.5 448.8,251.7 446.8,262.7 420.3,259.0" fill="#ebed43"/><polygon points="448.8,251.7 474.8,256.6 473.5,267.1 446.8,262.7" fill="#ebed43"/><polygon points="474.8,256.6 501.1,261.5 500.6,271.6 473.5,267.1" fill="#e7f34e"/><polygon points="501.1,261.5 527.8,265.9 528.0,276.2 500.6,271.6" fill="#e6f452"/><polygon points="153.7,224.8 176.4,228.6 168.7,241.6 145.5,237.7" fill="#7e7df8"/><polygon points="176.4,228.6 199.2,231.2 191.7,243.7 168.7,241.6" fill="#8d93f8"/><polygon points="199.2,231.2 222.2,233.2 215.2,246.5 191.7,243.7" fill="#a4c0ea"/><polygon points="222.2,233.2 245.7,236.5 239.2,250.0 215.2,246.5" fill="#afd9d6"/><polygon points="245.7,236.5 269.7,240.5 263.6,254.2 239.2,250.0" fill="#b2e0d0"/><polygon points="269.7,240.5 293.8,243.2 288.2,257.7 263.6,254.2" fill="#b4e2cd"/><polygon points="293.8,243.2 318.4,247.3 313.3,262.0 288.2,257.7" fill="#bae6c4"/><polygon points="318.4,247.3 343.3,251.5 338.6,266.3 313.3,262.0" fill="#bae6c4"/><polygon points="343.3,251.5 368.6,252.4 364.4,267.5 338.6,266.3" fill="#d3f78f"/><polygon points="368.6,252.4 394.2,256.7 390.6,269.9 364.4,267.5" fill="#e5f556"/><polygon points="394.2,256.7 420.3,259.0 417.4,271.8 390.6,269.9" fill="#f4d828"/><polygon points="420.3,259.0 446.8,262.7 444.4,275.7 417.4,271.8" fill="#f9be16"/><polygon points="446.8,262.7 473.5,267.1 471.8,280.3 444.4,275.7" fill="#fabc14"/><polygon points="473.5,267.1 500.6,271.6 499.5,285.0 471.8,280.3" fill="#fabc14"/><polygon points="500.6,271.6 528.0,276.2 527.6,289.7 499.5,285.0" fill="#fabc14"/><polygon points="145.5,237.7 168.7,241.6 160.6,255.2 137.1,251.1" fill="#7e7df8"/><polygon points="168.7,241.6 191.7,243.7 184.4,259.4 160.6,255.2" fill="#898cf9"/><polygon points="191.7,243.7 215.2,246.5 208.6,263.7 184.4,259.4" fill="#8e98f6"/><polygon points="215.2,246.5 239.2,250.0 232.9,267.3 208.6,263.7" fill="#9db4ee"/><polygon points="239.2,250.0 263.6,254.2 257.5,270.4 232.9,267.3" fill="#a6c4e8"/><polygon points="263.6,254.2 288.2,257.7 282.5,273.5 257.5,270.4" fill="#aed6d9"/><polygon points="288.2,257.7 313.3,262.0 308.0,277.9 282.5,273.5" fill="#b2e0d0"/><polygon points="313.3,262.0 338.6,266.3 333.8,281.8 308.0,277.9" fill="#b3e1cf"/><polygon points="338.6,266.3 364.4,267.5 360.0,283.1 333.8,281.8" fill="#cdf5a0"/><polygon points="364.4,267.5 390.6,269.9 386.8,285.1 360.0,283.1" fill="#e5f556"/><polygon points="390.6,269.9 417.4,271.8 414.1,287.2 386.8,285.1" fill="#f7cb1e"/><polygon points="417.4,271.8 444.4,275.7 441.7,291.3 414.1,287.2" fill="#fbad0e"/><polygon points="444.4,275.7 471.8,280.3 469.7,296.1 441.7,291.3" fill="#fba00a"/><polygon points="471.8,280.3 499.5,285.0 498.0,301.0 469.7,296.1" fill="#fba00a"/><polygon points="499.5,285.0 527.6,289.7 526.8,306.0 498.0,301.0" fill="#fba00a"/><polygon points="137.1,251.1 160.6,255.2 152.2,269.4 128.3,265.1" fill="#7e7df8"/><polygon points="160.6,255.2 184.4,259.4 176.5,273.7 152.2,269.4" fill="#7e7df8"/><polygon points="184.4,259.4 208.6,263.7 201.1,278.2 176.5,273.7" fill="#7e7df8"/><polygon points="208.6,263.7 232.9,267.3 225.9,282.0 201.1,278.2" fill="#8587f8"/><polygon points="232.9,267.3 257.5,270.4 251.0,285.9 225.9,282.0" fill="#8e96f7"/><polygon points="257.5,270.4 282.5,273.5 276.6,289.8 251.0,285.9" fill="#9fb8ec"/><polygon points="282.5,273.5 308.0,277.9 302.5,293.9 276.6,289.8" fill="#a8c8e5"/><polygon points="308.0,277.9 333.8,281.8 328.8,298.6 302.5,293.9" fill="#aacedf"/><polygon points="333.8,281.8 360.0,283.1 355.5,299.5 328.8,298.6" fill="#bce8c0"/><polygon points="360.0,283.1 386.8,285.1 382.8,301.7 355.5,299.5" fill="#e1f762"/><polygon points="386.8,285.1 414.1,287.2 410.7,303.3 382.8,301.7" fill="#f6ce20"/><polygon points="414.1,287.2 441.7,291.3 438.9,307.6 410.7,303.3" fill="#fbad0e"/><polygon points="128.3,265.1 152.2,269.4 143.5,284.1 119.1,279.6" fill="#7e7df8"/><polygon points="152.2,269.4 176.5,273.7 168.2,288.7 143.5,284.1" fill="#7e7df8"/><polygon points="176.5,273.7 201.1,278.2 193.3,293.3 168.2,288.7" fill="#7e7df8"/><polygon points="201.1,278.2 225.9,282.0 218.5,297.3 193.3,293.3" fill="#8587f8"/><polygon points="225.9,282.0 251.0,285.9 244.2,301.4 218.5,297.3" fill="#8e94f8"/><polygon points="251.0,285.9 276.6,289.8 270.2,305.6 244.2,301.4" fill="#96a6f2"/><polygon points="276.6,289.8 302.5,293.9 296.7,309.8 270.2,305.6" fill="#a2bceb"/></g><line shape-rendering="crispEdges" x1="133.8" y1="328.1" x2="80.9" y2="153.7" stroke="#000" stroke-width="2.4"/><circle cx="224.6" cy="98.5" r="3.3" fill="#000"/><g font-family="Liberation Sans, sans-serif" font-size="12" fill="#000"><text x="65.2" y="166.6">2,4</text><text x="69.9" y="182.8">2,2</text><text x="82.2" y="200.4">2</text><text x="82.1" y="215.2">1,8</text><text x="86.9" y="230.3">1,6</text><text x="90.6" y="245.0">1,4</text><text x="95.7" y="259.1">1,2</text><text x="105.2" y="273.9">1</text><line x1="79.1" y1="161.0" x2="81.9" y2="161.0" stroke="#666" stroke-width="1"/><line x1="84.2" y1="177.7" x2="87.0" y2="177.7" stroke="#666" stroke-width="1"/><line x1="89.0" y1="193.8" x2="91.8" y2="193.8" stroke="#666" stroke-width="1"/><line x1="93.7" y1="209.3" x2="96.5" y2="209.3" stroke="#666" stroke-width="1"/><line x1="98.3" y1="224.2" x2="101.1" y2="224.2" stroke="#666" stroke-width="1"/><line x1="102.6" y1="238.7" x2="105.4" y2="238.7" stroke="#666" stroke-width="1"/><line x1="106.8" y1="252.6" x2="109.6" y2="252.6" stroke="#666" stroke-width="1"/><line x1="110.9" y1="266.0" x2="113.7" y2="266.0" stroke="#666" stroke-width="1"/></g><g font-family="Liberation Sans, sans-serif" font-size="11.6" fill="#000"><text x="531.2" y="210.1">35</text><text x="530.0" y="220.3">60,8</text><text x="530.0" y="231.2">86,7</text><text x="529.1" y="242.6">112,5</text><text x="528.5" y="254.0">138,3</text><text x="527.9" y="266.0">164,2</text><text x="527.3" y="277.8">190</text></g></svg></div>
 </div>
</div>
</body></html>
